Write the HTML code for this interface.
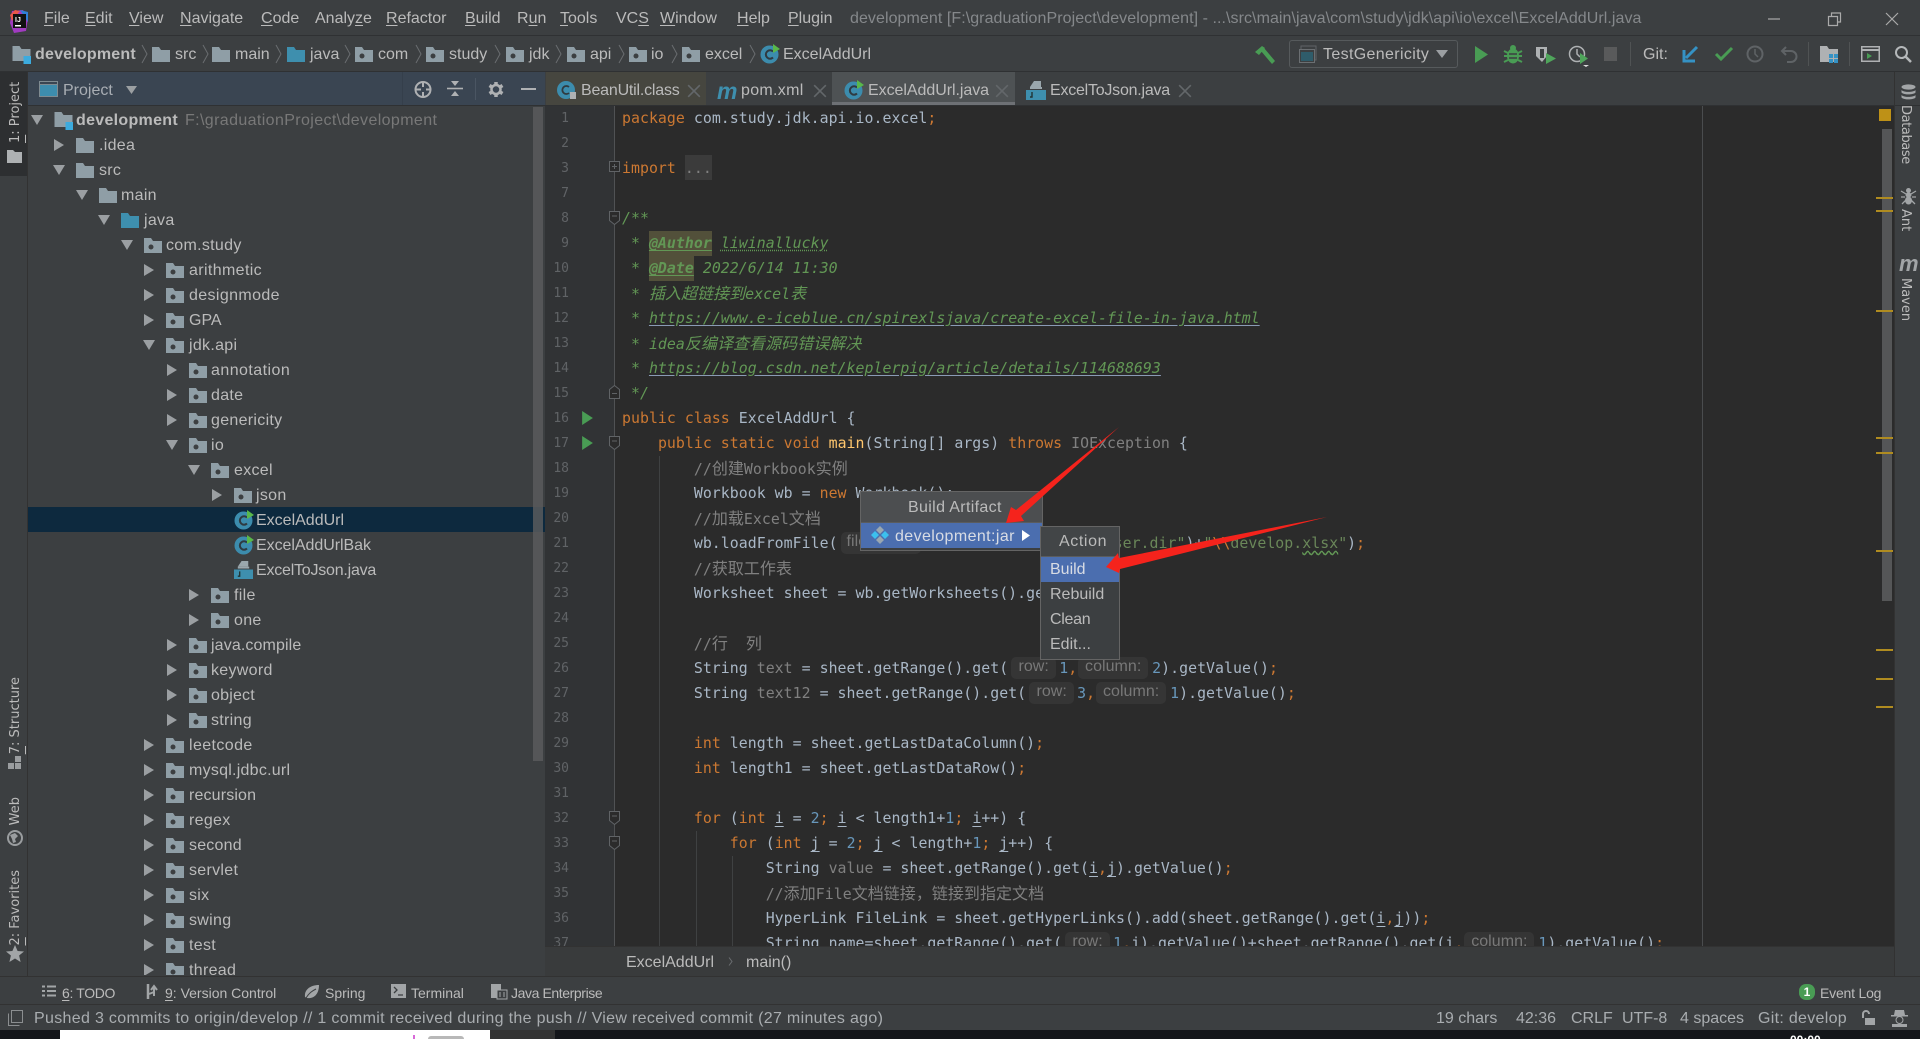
<!DOCTYPE html>
<html><head><meta charset="utf-8"><title>IDEA</title>
<style>
html,body{margin:0;padding:0;background:#3c3f41}
#a{position:relative;width:1920px;height:1039px;overflow:hidden;background:#3c3f41;font-family:"Liberation Sans","Noto Sans CJK SC",sans-serif;font-size:16px;color:#bbb}
.t{position:absolute;white-space:nowrap;line-height:20px}
.p{position:absolute;overflow:visible}
.b{position:absolute}
u{text-decoration-thickness:1px;text-underline-offset:2px}
.m{top:9px}
.n{top:45px}
.ch{position:absolute;top:44px;width:7px;height:20px}
.r{position:absolute;left:0;width:530px;height:25px;line-height:25px;white-space:nowrap}
.r span{position:absolute;top:1px;letter-spacing:.3px}
.r svg{position:absolute}
.c{position:absolute;left:622px;height:25px;line-height:25px;white-space:pre;font-family:"DejaVu Sans Mono","Noto Sans CJK SC",monospace;font-size:14.86px;letter-spacing:.035px;color:#a9b7c6}
.ln{position:absolute;left:545px;width:24px;height:25px;line-height:25px;text-align:right;font-family:"DejaVu Sans Mono",monospace;font-size:13px;color:#606366}
.k{color:#cc7832}.g{color:#808080}.d{color:#629755;font-style:italic}.s{color:#6a8759}.o{color:#6897bb}.f{color:#ffc66d}
.z{font-size:16px}
.h{display:inline-block;position:relative;height:25px;vertical-align:top}
.h i{position:absolute;top:1px;height:22px;background:#353535;border-radius:5px;font:16px/19px "Liberation Sans",sans-serif;color:#787878;text-align:center}
.tag{background:#52503a;font-weight:bold;text-decoration:underline;text-underline-offset:2px;display:inline-block;height:25px}
.lk{text-decoration:underline;text-decoration-color:#8a9bb5;text-underline-offset:2px}
.v{text-decoration:underline;text-underline-offset:3px;text-decoration-thickness:1px}
.vs{writing-mode:vertical-rl;transform:rotate(180deg);font:13px "DejaVu Sans",sans-serif;position:absolute;white-space:nowrap;line-height:16px;color:#bbb}
.vr{writing-mode:vertical-rl;font:13px "DejaVu Sans",sans-serif;position:absolute;white-space:nowrap;line-height:16px;color:#bbb}
.mk{position:absolute;left:1876px;width:17px;height:2px;background:#b08c20}
.x{position:absolute;top:81px;width:14px;height:16px}
.bt{top:983px;font-size:14px}
.st{top:1009px;font-size:16px;color:#a9adb0}
</style></head><body><div id="a">

<svg width="0" height="0" style="position:absolute"><defs>
<symbol id="fo" viewBox="0 0 18 17"><path d="M0 1h7l2 3h9v12H0z" fill="#8f9ea6"/></symbol>
<symbol id="fp" viewBox="0 0 18 17"><path d="M0 1h7l2 3h9v12H0z" fill="#8f9ea6"/><circle cx="7" cy="10" r="2.5" fill="#3c3f41"/></symbol>
<symbol id="fb" viewBox="0 0 18 17"><path d="M0 1h7l2 3h9v12H0z" fill="#3e8fae"/></symbol>
<symbol id="fm" viewBox="0 0 18 20"><path d="M0 1h7l2 3h9v12H0z" fill="#8f9ea6"/><rect x="11" y="11" width="8" height="8" fill="#3cabde"/></symbol>
<symbol id="ao" viewBox="0 0 12 12"><path d="M0 1h12L6 11z" fill="#9b9fa2"/></symbol>
<symbol id="ac" viewBox="0 0 12 12"><path d="M1 0l10 6-10 6z" fill="#9b9fa2"/></symbol>
<symbol id="cl" viewBox="0 0 20 20"><circle cx="9.5" cy="10.5" r="9" fill="#3c8cad"/><path d="M13 7.5A4.2 4.2 0 1 0 13 13.5" fill="none" stroke="#2f3a40" stroke-width="2"/><path d="M13 0l7 5-7 4z" fill="#59b84a"/></symbol>
<symbol id="jf" viewBox="0 0 20 20"><path d="M8 1h7v6H4z" fill="#9aa7ad"/><rect x="4" y="7" width="12" height="2" fill="#9aa7ad"/><rect x="0" y="10" width="20" height="10" fill="#3e8fae"/><path d="M6 12v5H4" fill="none" stroke="#233" stroke-width="1.4"/></symbol>
<symbol id="ch" viewBox="0 0 7 20"><path d="M1 1l5 9-5 9" fill="none" stroke="#6a6d70" stroke-width="1"/></symbol>
<symbol id="tx" viewBox="0 0 12 12"><path d="M1 1l10 10M11 1L1 11" stroke="#63676a" stroke-width="1.4" fill="none"/></symbol>
<symbol id="rn" viewBox="0 0 10 13"><path d="M0 0l10 6.5L0 13z" fill="#499c54"/></symbol>
</defs></svg>

<!-- title bar -->
<div class="b" style="left:0;top:35px;width:1920px;height:1px;background:#2f3133"></div>
<svg class="p" style="left:9px;top:9px" width="20" height="24" viewBox="0 0 20 24"><path d="M3 2l11-1 5 8-2 13-12 2L1 14z" fill="#a03bc0"/><path d="M1 6l5-5 5 1-8 10z" fill="#e8574a"/><path d="M11 1l8 2v10z" fill="#2f7fd8"/><rect x="4" y="5" width="13" height="14" fill="#111"/><rect x="6" y="16" width="6" height="1.5" fill="#fff"/><text x="6" y="13" font-size="7" font-weight="bold" fill="#fff" font-family="Liberation Sans">IJ</text></svg>
<div class="t m" style="left:44px"><u>F</u>ile</div>
<div class="t m" style="left:85px"><u>E</u>dit</div>
<div class="t m" style="left:129px"><u>V</u>iew</div>
<div class="t m" style="left:180px"><u>N</u>avigate</div>
<div class="t m" style="left:261px"><u>C</u>ode</div>
<div class="t m" style="left:315px">Analy<u>z</u>e</div>
<div class="t m" style="left:386px"><u>R</u>efactor</div>
<div class="t m" style="left:465px"><u>B</u>uild</div>
<div class="t m" style="left:517px">R<u>u</u>n</div>
<div class="t m" style="left:560px"><u>T</u>ools</div>
<div class="t m" style="left:616px">VC<u>S</u></div>
<div class="t m" style="left:660px"><u>W</u>indow</div>
<div class="t m" style="left:737px"><u>H</u>elp</div>
<div class="t m" style="left:788px"><u>P</u>lugin</div>
<div class="t" style="left:850px;top:9px;color:#85888b;letter-spacing:.065px">development [F:\graduationProject\development] - ...\src\main\java\com\study\jdk\api\io\excel\ExcelAddUrl.java</div>
<svg class="p" style="left:1768px;top:12px" width="140" height="14"><path d="M0 7h12" stroke="#aaa" stroke-width="1.2"/><path d="M60.5 4.5h9v9h-9zM63.5 4V1h9v9h-3" fill="none" stroke="#aaa" stroke-width="1.2"/><path d="M118 1l12 12M130 1l-12 12" stroke="#aaa" stroke-width="1.2"/></svg>

<!-- nav bar -->
<div class="b" style="left:0;top:71px;width:1920px;height:1px;background:#2f3133"></div>
<svg class="p" style="left:12px;top:45px" width="19" height="20"><use href="#fm"/></svg>
<div class="t n" style="left:35px;font-weight:bold;letter-spacing:.2px">development</div>
<svg class="ch" style="left:141px"><use href="#ch"/></svg>
<svg class="p" style="left:152px;top:46px" width="18" height="17"><use href="#fo"/></svg><div class="t n" style="left:175px">src</div>
<svg class="ch" style="left:202px"><use href="#ch"/></svg>
<svg class="p" style="left:212px;top:46px" width="18" height="17"><use href="#fo"/></svg><div class="t n" style="left:235px">main</div>
<svg class="ch" style="left:275px"><use href="#ch"/></svg>
<svg class="p" style="left:287px;top:46px" width="18" height="17"><use href="#fb"/></svg><div class="t n" style="left:310px">java</div>
<svg class="ch" style="left:344px"><use href="#ch"/></svg>
<svg class="p" style="left:355px;top:46px" width="18" height="17"><use href="#fp"/></svg><div class="t n" style="left:378px">com</div>
<svg class="ch" style="left:415px"><use href="#ch"/></svg>
<svg class="p" style="left:426px;top:46px" width="18" height="17"><use href="#fp"/></svg><div class="t n" style="left:449px">study</div>
<svg class="ch" style="left:494px"><use href="#ch"/></svg>
<svg class="p" style="left:506px;top:46px" width="18" height="17"><use href="#fp"/></svg><div class="t n" style="left:529px">jdk</div>
<svg class="ch" style="left:555px"><use href="#ch"/></svg>
<svg class="p" style="left:567px;top:46px" width="18" height="17"><use href="#fp"/></svg><div class="t n" style="left:590px">api</div>
<svg class="ch" style="left:618px"><use href="#ch"/></svg>
<svg class="p" style="left:629px;top:46px" width="18" height="17"><use href="#fp"/></svg><div class="t n" style="left:651px">io</div>
<svg class="ch" style="left:671px"><use href="#ch"/></svg>
<svg class="p" style="left:682px;top:46px" width="18" height="17"><use href="#fp"/></svg><div class="t n" style="left:705px">excel</div>
<svg class="ch" style="left:749px"><use href="#ch"/></svg>
<svg class="p" style="left:760px;top:44px" width="20" height="20"><use href="#cl"/></svg><div class="t n" style="left:783px">ExcelAddUrl</div>
<svg class="p" style="left:1254px;top:44px" width="22" height="20" viewBox="0 0 22 20"><path d="M1 8L8 2l3 2-6 7zM7 7l3-3 11 13-3 3z" fill="#499c54"/></svg>
<div class="b" style="left:1289px;top:40px;width:167px;height:26px;border:1px solid #565a5c;border-radius:3px"></div>
<svg class="p" style="left:1299px;top:45px" width="18" height="18"><rect x="2" y="1" width="15" height="14" fill="none" stroke="#5f6366"/><rect x="0.5" y="4.5" width="15" height="13" fill="#3c3f41" stroke="#6b6f72"/><rect x="2" y="7" width="12" height="9" fill="#2f5c6a"/></svg>
<div class="t n" style="left:1323px;letter-spacing:.35px">TestGenericity</div>
<svg class="p" style="left:1436px;top:50px" width="12" height="8"><path d="M0 0h12L6 8z" fill="#9b9fa2"/></svg>
<svg class="p" style="left:1475px;top:46px" width="13" height="17"><path d="M0 0l13 8.500L0 17z" fill="#499c54"/></svg>
<svg class="p" style="left:1504px;top:44px" width="18" height="20" viewBox="0 0 18 20"><ellipse cx="9" cy="12" rx="6" ry="7.500" fill="#499c54"/><circle cx="9" cy="4" r="3" fill="#499c54"/><path d="M0 7l4 2M18 7l-4 2M0 12h4M18 12h-4M0 18l4-2M18 18l-4-2" stroke="#499c54" stroke-width="2"/><path d="M5 10h8M5 14h8" stroke="#3c3f41" stroke-width="1.500"/></svg>
<svg class="p" style="left:1535px;top:45px" width="21" height="20" viewBox="0 0 21 20"><path d="M1 2h11v9l-5 6-6-6z" fill="#aeb1b3"/><rect x="5" y="4" width="4" height="9" fill="#3c3f41"/><path d="M11 8l10 5.500L11 19z" fill="#4fa55b"/></svg>
<svg class="p" style="left:1568px;top:45px" width="22" height="22" viewBox="0 0 22 22"><circle cx="9" cy="9" r="7.500" fill="none" stroke="#aeb1b3" stroke-width="1.500"/><path d="M9 4v5l3 3" fill="none" stroke="#aeb1b3" stroke-width="1.500"/><path d="M12 8l8 5.500-8 5.500z" fill="#4fa55b"/><path d="M15 20h6l-3 2z" fill="#ddd"/></svg>
<div class="b" style="left:1604px;top:47px;width:13px;height:14px;background:#595a5b"></div>
<div class="b" style="left:1630px;top:42px;width:1px;height:24px;background:#505354"></div>
<div class="t n" style="left:1643px">Git:</div>
<svg class="p" style="left:1682px;top:45px" width="17" height="18" viewBox="0 0 17 18"><path d="M15 2L4 13M2 5v11h11" fill="none" stroke="#3592c4" stroke-width="3"/></svg>
<svg class="p" style="left:1715px;top:47px" width="18" height="14"><path d="M1 7l5 5L17 1" fill="none" stroke="#499c54" stroke-width="3"/></svg>
<svg class="p" style="left:1746px;top:45px" width="18" height="18"><circle cx="9" cy="9" r="7.500" fill="none" stroke="#5f6366" stroke-width="2"/><path d="M9 4v5l3 3" fill="none" stroke="#5f6366" stroke-width="1.500"/></svg>
<svg class="p" style="left:1780px;top:45px" width="18" height="18"><path d="M6 2L2 6l4 4M2 6h9a5 5 0 0 1 0 11H7" fill="none" stroke="#5f6366" stroke-width="2"/></svg>
<div class="b" style="left:1808px;top:42px;width:1px;height:24px;background:#505354"></div>
<svg class="p" style="left:1820px;top:45px" width="19" height="18"><path d="M0 1h7l2 3h9v13H0z" fill="#afb1b3"/><rect x="9" y="9" width="4" height="4" fill="#3592c4"/><rect x="14" y="9" width="4" height="4" fill="#3592c4"/><rect x="9" y="14" width="4" height="4" fill="#3592c4"/><rect x="14" y="14" width="4" height="4" fill="#3592c4"/></svg>
<div class="b" style="left:1849px;top:42px;width:1px;height:24px;background:#505354"></div>
<svg class="p" style="left:1861px;top:46px" width="19" height="16"><rect x=".75" y=".75" width="17.500" height="14.500" fill="none" stroke="#afb1b3" stroke-width="1.500"/><path d="M1 4h17" stroke="#afb1b3" stroke-width="2"/><path d="M6 7l5 3-5 3z" fill="#499c54"/></svg>
<svg class="p" style="left:1894px;top:45px" width="18" height="18"><circle cx="7.500" cy="7.500" r="5.500" fill="none" stroke="#b5b8ba" stroke-width="2"/><path d="M11.500 11.500L17 17" stroke="#b5b8ba" stroke-width="2.500"/></svg>

<!-- left stripe -->
<div class="b" style="left:27px;top:72px;width:1px;height:904px;background:#323232"></div>
<div class="b" style="left:0;top:72px;width:27px;height:104px;background:#2d2f31"></div>
<div class="vs" style="left:8px;top:81px;height:62px"><u>1</u>: Project</div>
<svg class="p" style="left:7px;top:149px" width="15" height="14"><path d="M0 1h6l2 2h7v11H0z" fill="#aeb1b3"/></svg>
<div class="vs" style="left:8px;top:677px"><u>7</u>: Structure</div>
<svg class="p" style="left:8px;top:756px" width="14" height="13"><rect x="7" y="0" width="6" height="6" fill="#9a9d9f"/><rect x="0" y="7" width="6" height="6" fill="#9a9d9f"/><rect x="7" y="7" width="6" height="6" fill="#9a9d9f"/></svg>
<div class="vs" style="left:8px;top:797px">Web</div>
<svg class="p" style="left:7px;top:830px" width="16" height="16"><circle cx="8" cy="8" r="7" fill="#3c3f41" stroke="#9a9d9f" stroke-width="2"/><path d="M3 5l5-2 3 3-3 3 1 3-3 1-1-4z" fill="#9a9d9f"/></svg>
<div class="vs" style="left:8px;top:870px"><u>2</u>: Favorites</div>
<svg class="p" style="left:6px;top:945px" width="18" height="17"><path d="M9 0l2.600 6 6.400.5-4.900 4 1.500 6.500L9 13.500 3.400 17l1.500-6.500L0 6.500 6.400 6z" fill="#a2a5a7"/></svg>

<!-- project tool window header -->
<div class="b" style="left:28px;top:72px;width:517px;height:33px;background:#3a4552"></div>
<div class="b" style="left:28px;top:105px;width:1892px;height:1px;background:#2f3133"></div>
<div class="b" style="left:402px;top:72px;width:1px;height:33px;background:#353f4b"></div>
<svg class="p" style="left:39px;top:81px" width="19" height="16"><rect x=".5" y=".5" width="18" height="15" fill="#3d8dae" stroke="#7f8b91"/><rect x=".5" y=".5" width="18" height="3" fill="#3a4552" stroke="#7f8b91"/></svg>
<div class="t" style="left:63px;top:81px;color:#a8adb3">Project</div>
<svg class="p" style="left:126px;top:86px" width="11" height="8"><path d="M0 0h11L5.500 8z" fill="#9b9fa2"/></svg>
<svg class="p" style="left:414px;top:80px" width="18" height="19"><circle cx="9" cy="9.500" r="7.500" fill="none" stroke="#afb1b3" stroke-width="2"/><path d="M9 2v5M9 12v5M2 9.500h5M12 9.500h5" stroke="#afb1b3" stroke-width="2"/></svg>
<svg class="p" style="left:447px;top:81px" width="16" height="16"><path d="M0 7.500h16" stroke="#afb1b3" stroke-width="1.600"/><path d="M4 0h8L8 5zM4 15h8l-4-5z" fill="#afb1b3"/></svg>
<div class="b" style="left:475px;top:78px;width:1px;height:22px;background:#4a5562"></div>
<svg class="p" style="left:488px;top:81px" width="16" height="17" viewBox="0 0 16 17"><path d="M8 1v3M8 13v3M1.500 4.500L4 6M12 11l2.500 1.500M1.500 12.500L4 11M12 6l2.500-1.500" stroke="#afb1b3" stroke-width="3.500"/><circle cx="8" cy="8.500" r="4.500" fill="none" stroke="#afb1b3" stroke-width="2.500"/></svg>
<div class="b" style="left:521px;top:88px;width:15px;height:2px;background:#afb1b3"></div>

<!-- tree -->
<div class="b" style="left:28px;top:106px;width:517px;height:869px;overflow:hidden;background:#3c3f41" id="tree">
<div class="b" style="left:0;top:401px;width:517px;height:25px;background:#0d293e"></div>
<div class="b" style="left:505px;top:1px;width:10px;height:654px;background:#595b5d;opacity:.85"></div>
<div style="position:absolute;left:-28px;top:-106px;width:560px">
<div class="r" style="top:107px"><svg style="left:31px;top:7px" width="12" height="12"><use href="#ao"/></svg><svg style="left:54px;top:4px" width="19" height="20"><use href="#fm"/></svg><span style="left:76px;font-weight:bold">development</span><span style="left:185px;color:#787878;letter-spacing:.38px">F:\graduationProject\development</span></div>
<div class="r" style="top:132px"><svg style="left:53px;top:7px" width="12" height="12"><use href="#ac"/></svg><svg style="left:76px;top:5px" width="18" height="17"><use href="#fo"/></svg><span style="left:99px">.idea</span></div>
<div class="r" style="top:157px"><svg style="left:53px;top:7px" width="12" height="12"><use href="#ao"/></svg><svg style="left:76px;top:5px" width="18" height="17"><use href="#fo"/></svg><span style="left:99px">src</span></div>
<div class="r" style="top:182px"><svg style="left:76px;top:7px" width="12" height="12"><use href="#ao"/></svg><svg style="left:99px;top:5px" width="18" height="17"><use href="#fo"/></svg><span style="left:121px">main</span></div>
<div class="r" style="top:207px"><svg style="left:98px;top:7px" width="12" height="12"><use href="#ao"/></svg><svg style="left:121px;top:5px" width="18" height="17"><use href="#fb"/></svg><span style="left:144px">java</span></div>
<div class="r" style="top:232px"><svg style="left:121px;top:7px" width="12" height="12"><use href="#ao"/></svg><svg style="left:144px;top:5px" width="18" height="17"><use href="#fp"/></svg><span style="left:166px">com.study</span></div>
<div class="r" style="top:257px"><svg style="left:143px;top:7px" width="12" height="12"><use href="#ac"/></svg><svg style="left:166px;top:5px" width="18" height="17"><use href="#fp"/></svg><span style="left:189px;letter-spacing:.37px">arithmetic</span></div>
<div class="r" style="top:282px"><svg style="left:143px;top:7px" width="12" height="12"><use href="#ac"/></svg><svg style="left:166px;top:5px" width="18" height="17"><use href="#fp"/></svg><span style="left:189px;letter-spacing:.37px">designmode</span></div>
<div class="r" style="top:307px"><svg style="left:143px;top:7px" width="12" height="12"><use href="#ac"/></svg><svg style="left:166px;top:5px" width="18" height="17"><use href="#fp"/></svg><span style="left:189px;letter-spacing:0">GPA</span></div>
<div class="r" style="top:332px"><svg style="left:143px;top:7px" width="12" height="12"><use href="#ao"/></svg><svg style="left:166px;top:5px" width="18" height="17"><use href="#fp"/></svg><span style="left:189px">jdk.api</span></div>
<div class="r" style="top:357px"><svg style="left:166px;top:7px" width="12" height="12"><use href="#ac"/></svg><svg style="left:189px;top:5px" width="18" height="17"><use href="#fp"/></svg><span style="left:211px;letter-spacing:.45px">annotation</span></div>
<div class="r" style="top:382px"><svg style="left:166px;top:7px" width="12" height="12"><use href="#ac"/></svg><svg style="left:189px;top:5px" width="18" height="17"><use href="#fp"/></svg><span style="left:211px">date</span></div>
<div class="r" style="top:407px"><svg style="left:166px;top:7px" width="12" height="12"><use href="#ac"/></svg><svg style="left:189px;top:5px" width="18" height="17"><use href="#fp"/></svg><span style="left:211px">genericity</span></div>
<div class="r" style="top:432px"><svg style="left:166px;top:7px" width="12" height="12"><use href="#ao"/></svg><svg style="left:189px;top:5px" width="18" height="17"><use href="#fp"/></svg><span style="left:211px">io</span></div>
<div class="r" style="top:457px"><svg style="left:188px;top:7px" width="12" height="12"><use href="#ao"/></svg><svg style="left:211px;top:5px" width="18" height="17"><use href="#fp"/></svg><span style="left:234px">excel</span></div>
<div class="r" style="top:482px"><svg style="left:211px;top:7px" width="12" height="12"><use href="#ac"/></svg><svg style="left:234px;top:5px" width="18" height="17"><use href="#fp"/></svg><span style="left:256px">json</span></div>
<div class="r" style="top:507px"><svg style="left:234px;top:3px" width="20" height="20"><use href="#cl"/></svg><span style="left:256px;letter-spacing:0">ExcelAddUrl</span></div>
<div class="r" style="top:532px"><svg style="left:234px;top:3px" width="20" height="20"><use href="#cl"/></svg><span style="left:256px;letter-spacing:-.05px">ExcelAddUrlBak</span></div>
<div class="r" style="top:557px"><svg style="left:234px;top:3px" width="19" height="19"><use href="#jf"/></svg><span style="left:256px;letter-spacing:-.22px">ExcelToJson.java</span></div>
<div class="r" style="top:582px"><svg style="left:188px;top:7px" width="12" height="12"><use href="#ac"/></svg><svg style="left:211px;top:5px" width="18" height="17"><use href="#fp"/></svg><span style="left:234px">file</span></div>
<div class="r" style="top:607px"><svg style="left:188px;top:7px" width="12" height="12"><use href="#ac"/></svg><svg style="left:211px;top:5px" width="18" height="17"><use href="#fp"/></svg><span style="left:234px">one</span></div>
<div class="r" style="top:632px"><svg style="left:166px;top:7px" width="12" height="12"><use href="#ac"/></svg><svg style="left:189px;top:5px" width="18" height="17"><use href="#fp"/></svg><span style="left:211px;letter-spacing:.12px">java.compile</span></div>
<div class="r" style="top:657px"><svg style="left:166px;top:7px" width="12" height="12"><use href="#ac"/></svg><svg style="left:189px;top:5px" width="18" height="17"><use href="#fp"/></svg><span style="left:211px">keyword</span></div>
<div class="r" style="top:682px"><svg style="left:166px;top:7px" width="12" height="12"><use href="#ac"/></svg><svg style="left:189px;top:5px" width="18" height="17"><use href="#fp"/></svg><span style="left:211px;letter-spacing:.2px">object</span></div>
<div class="r" style="top:707px"><svg style="left:166px;top:7px" width="12" height="12"><use href="#ac"/></svg><svg style="left:189px;top:5px" width="18" height="17"><use href="#fp"/></svg><span style="left:211px">string</span></div>
<div class="r" style="top:732px"><svg style="left:143px;top:7px" width="12" height="12"><use href="#ac"/></svg><svg style="left:166px;top:5px" width="18" height="17"><use href="#fp"/></svg><span style="left:189px;letter-spacing:.4px">leetcode</span></div>
<div class="r" style="top:757px"><svg style="left:143px;top:7px" width="12" height="12"><use href="#ac"/></svg><svg style="left:166px;top:5px" width="18" height="17"><use href="#fp"/></svg><span style="left:189px;letter-spacing:.25px">mysql.jdbc.url</span></div>
<div class="r" style="top:782px"><svg style="left:143px;top:7px" width="12" height="12"><use href="#ac"/></svg><svg style="left:166px;top:5px" width="18" height="17"><use href="#fp"/></svg><span style="left:189px;letter-spacing:.15px">recursion</span></div>
<div class="r" style="top:807px"><svg style="left:143px;top:7px" width="12" height="12"><use href="#ac"/></svg><svg style="left:166px;top:5px" width="18" height="17"><use href="#fp"/></svg><span style="left:189px">regex</span></div>
<div class="r" style="top:832px"><svg style="left:143px;top:7px" width="12" height="12"><use href="#ac"/></svg><svg style="left:166px;top:5px" width="18" height="17"><use href="#fp"/></svg><span style="left:189px;letter-spacing:.2px">second</span></div>
<div class="r" style="top:857px"><svg style="left:143px;top:7px" width="12" height="12"><use href="#ac"/></svg><svg style="left:166px;top:5px" width="18" height="17"><use href="#fp"/></svg><span style="left:189px">servlet</span></div>
<div class="r" style="top:882px"><svg style="left:143px;top:7px" width="12" height="12"><use href="#ac"/></svg><svg style="left:166px;top:5px" width="18" height="17"><use href="#fp"/></svg><span style="left:189px">six</span></div>
<div class="r" style="top:907px"><svg style="left:143px;top:7px" width="12" height="12"><use href="#ac"/></svg><svg style="left:166px;top:5px" width="18" height="17"><use href="#fp"/></svg><span style="left:189px">swing</span></div>
<div class="r" style="top:932px"><svg style="left:143px;top:7px" width="12" height="12"><use href="#ac"/></svg><svg style="left:166px;top:5px" width="18" height="17"><use href="#fp"/></svg><span style="left:189px">test</span></div>
<div class="r" style="top:957px"><svg style="left:143px;top:7px" width="12" height="12"><use href="#ac"/></svg><svg style="left:166px;top:5px" width="18" height="17"><use href="#fp"/></svg><span style="left:189px">thread</span></div>
</div></div>

<!-- tabs -->
<div class="b" style="left:546px;top:72px;width:160px;height:33px;background:#46463f"></div>
<div class="b" style="left:832px;top:72px;width:183px;height:30px;background:#4e5254"></div>
<div class="b" style="left:832px;top:102px;width:183px;height:3px;background:#6e7175"></div>
<svg class="p" style="left:557px;top:80px" width="20" height="20" viewBox="0 0 20 20"><circle cx="9" cy="10" r="9" fill="#3c8cad"/><path d="M12 7a4 4 0 1 0 0 6" fill="none" stroke="#2f3a40" stroke-width="1.800"/><rect x="13" y="12" width="6" height="7" fill="#afb1b3"/></svg>
<div class="t" style="left:581px;top:81px;letter-spacing:-.2px">BeanUtil.class</div>
<svg class="x" style="left:687px;top:83px" width="12" height="12"><use href="#tx"/></svg>
<div class="t" style="left:717px;top:78px;font:italic bold 23px/26px 'Liberation Sans',sans-serif;color:#3e8fae">m</div>
<div class="t" style="left:741px;top:81px;letter-spacing:.3px">pom.xml</div>
<svg class="x" style="left:813px;top:83px" width="12" height="12"><use href="#tx"/></svg>
<svg class="p" style="left:844px;top:80px" width="20" height="20"><use href="#cl"/></svg>
<div class="t" style="left:868px;top:81px;letter-spacing:-.05px">ExcelAddUrl.java</div>
<svg class="x" style="left:995px;top:83px" width="12" height="12"><use href="#tx"/></svg>
<svg class="p" style="left:1026px;top:80px" width="20" height="20"><use href="#jf"/></svg>
<div class="t" style="left:1050px;top:81px;letter-spacing:-.23px">ExcelToJson.java</div>
<svg class="x" style="left:1178px;top:83px" width="12" height="12"><use href="#tx"/></svg>

<!-- right stripe -->
<div class="b" style="left:1894px;top:72px;width:1px;height:904px;background:#323232"></div>
<svg class="p" style="left:1901px;top:84px" width="15" height="17"><ellipse cx="7.500" cy="3" rx="7" ry="2.600" fill="#a2a5a7"/><path d="M.5 6c2 2.500 12 2.500 14 0v2.500c-2 2.500-12 2.500-14 0zM.5 11c2 2.500 12 2.500 14 0v2.500c-2 2.500-12 2.500-14 0z" fill="#a2a5a7"/></svg>
<div class="vr" style="left:1897px;top:105px;letter-spacing:-.4px">Database</div>
<svg class="p" style="left:1901px;top:187px" width="15" height="18"><ellipse cx="7.500" cy="3.500" rx="2.500" ry="2.500" fill="#a2a5a7"/><ellipse cx="7.500" cy="8" rx="3" ry="2.500" fill="#a2a5a7"/><ellipse cx="7.500" cy="13.500" rx="3.500" ry="4" fill="#a2a5a7"/><path d="M0 4l5 3M15 4l-5 3M0 10h4M15 10h-4M1 17l4-4M14 17l-4-4" stroke="#a2a5a7" stroke-width="1.300"/></svg>
<div class="vr" style="left:1897px;top:209px">Ant</div>
<div class="t" style="left:1899px;top:253px;font:italic bold 22px/22px 'Liberation Sans',sans-serif;color:#a2a5a7">m</div>
<div class="vr" style="left:1897px;top:278px">Maven</div>

<!-- editor -->
<div class="b" id="ed" style="left:545px;top:106px;width:1349px;height:840px;overflow:hidden;background:#2b2b2b">
<div class="b" style="left:0;top:0;width:69px;height:840px;background:#313335"></div>
<div class="b" style="left:69px;top:0;width:1px;height:840px;background:#505254"></div>
<div class="b" style="left:1157px;top:0;width:1px;height:840px;background:#4a4c4e"></div>
<div class="b" style="left:114px;top:350px;width:1px;height:490px;background:#3f4142"></div>
<div class="b" style="left:151px;top:725px;width:1px;height:115px;background:#3f4142"></div>
<div class="b" style="left:187px;top:750px;width:1px;height:90px;background:#3f4142"></div>
<div class="b" style="left:1337px;top:23px;width:10px;height:472px;background:#555657"></div>
<div style="position:absolute;left:-545px;top:-106px;width:1920px;height:1039px">
<div class="ln" style="top:106px">1</div><div class="ln" style="top:131px">2</div><div class="ln" style="top:156px">3</div><div class="ln" style="top:181px">7</div><div class="ln" style="top:206px">8</div><div class="ln" style="top:231px">9</div><div class="ln" style="top:256px">10</div><div class="ln" style="top:281px">11</div><div class="ln" style="top:306px">12</div><div class="ln" style="top:331px">13</div><div class="ln" style="top:356px">14</div><div class="ln" style="top:381px">15</div><div class="ln" style="top:406px">16</div><div class="ln" style="top:431px">17</div><div class="ln" style="top:456px">18</div><div class="ln" style="top:481px">19</div><div class="ln" style="top:506px">20</div><div class="ln" style="top:531px">21</div><div class="ln" style="top:556px">22</div><div class="ln" style="top:581px">23</div><div class="ln" style="top:606px">24</div><div class="ln" style="top:631px">25</div><div class="ln" style="top:656px">26</div><div class="ln" style="top:681px">27</div><div class="ln" style="top:706px">28</div><div class="ln" style="top:731px">29</div><div class="ln" style="top:756px">30</div><div class="ln" style="top:781px">31</div><div class="ln" style="top:806px">32</div><div class="ln" style="top:831px">33</div><div class="ln" style="top:856px">34</div><div class="ln" style="top:881px">35</div><div class="ln" style="top:906px">36</div><div class="ln" style="top:931px">37</div>

<svg class="p" style="left:582px;top:411px" width="11" height="14"><use href="#rn"/></svg>
<svg class="p" style="left:582px;top:436px" width="11" height="14"><use href="#rn"/></svg>

<svg class="p" style="left:609px;top:161px" width="12" height="12"><rect x=".5" y=".5" width="10" height="10" fill="#2b2b2b" stroke="#606366"/><path d="M3 5.500h5M5.500 3v5" stroke="#606366"/></svg>
<svg class="p" style="left:609px;top:211px" width="12" height="15"><path d="M.5.5h10v9l-5 4-5-4z" fill="#2b2b2b" stroke="#606366"/><path d="M3 5h5" stroke="#606366"/></svg>
<svg class="p" style="left:609px;top:384px" width="12" height="15"><path d="M.5 14.500h10v-9l-5-4-5 4z" fill="#2b2b2b" stroke="#606366"/><path d="M3 9.500h5" stroke="#606366"/></svg>
<svg class="p" style="left:609px;top:436px" width="12" height="15"><path d="M.5.5h10v9l-5 4-5-4z" fill="#2b2b2b" stroke="#606366"/><path d="M3 5h5" stroke="#606366"/></svg>
<svg class="p" style="left:609px;top:811px" width="12" height="15"><path d="M.5.5h10v9l-5 4-5-4z" fill="#2b2b2b" stroke="#606366"/><path d="M3 5h5" stroke="#606366"/></svg>
<svg class="p" style="left:609px;top:836px" width="12" height="15"><path d="M.5.5h10v9l-5 4-5-4z" fill="#2b2b2b" stroke="#606366"/><path d="M3 5h5" stroke="#606366"/></svg>

<div class="b" style="left:685px;top:155px;width:27px;height:25px;background:#3b3b3b"></div>

<div class="c" style="top:106px"><span class="k">package</span> com.study.jdk.api.io.excel<span class="k">;</span></div>
<div class="c" style="top:156px"><span class="k">import</span> <span class="g">...</span></div>
<div class="c d" style="top:206px">/**</div>
<div class="c d" style="top:231px"> * <span class="tag">@Author</span> <span style="text-decoration:underline dotted;text-underline-offset:2px">liwinallucky</span></div>
<div class="c d" style="top:256px"> * <span class="tag">@Date</span> 2022/6/14 11:30</div>
<div class="c d" style="top:281px"> * <span class="z">插入超链接到</span>excel<span class="z">表</span></div>
<div class="c d" style="top:306px"> * <span class="lk">https://www.e-iceblue.cn/spirexlsjava/create-excel-file-in-java.html</span></div>
<div class="c d" style="top:331px"> * idea<span class="z">反编译查看源码错误解决</span></div>
<div class="c d" style="top:356px"> * <span class="lk">https://blog.csdn.net/keplerpig/article/details/114688693</span></div>
<div class="c d" style="top:381px"> */</div>
<div class="c" style="top:406px"><span class="k">public class</span> ExcelAddUrl {</div>
<div class="c" style="top:431px">    <span class="k">public static void</span> <span class="f">main</span>(String[] args) <span class="k">throws</span> <span class="g">IOException</span> {</div>
<div class="c g" style="top:456px">        //<span class="z">创建</span>Workbook<span class="z">实例</span></div>
<div class="c" style="top:481px">        Workbook wb = <span class="k">new</span> Workbook();</div>
<div class="c g" style="top:506px">        //<span class="z">加载</span>Excel<span class="z">文档</span></div>
<div class="c" style="top:531px">        wb.loadFromFile(<span class="h" style="width:84px"><i style="left:3px;width:74px;padding-left:6px;text-align:left">filename:</i></span></div>
<div class="c" style="top:531px;left:925px">System.getProperty(<span class="s">"user.dir"</span>)+<span class="s">"<span class="k">\\</span>develop.<span style="text-decoration:underline wavy #629755;text-underline-offset:2px">xlsx</span>"</span>)<span class="k">;</span></div>
<div class="c g" style="top:556px">        //<span class="z">获取工作表</span></div>
<div class="c" style="top:581px">        Worksheet sheet = wb.getWorksheets().get(<span class="o">0</span>)<span class="k">;</span></div>
<div class="c g" style="top:631px">        //<span class="z">行</span>  <span class="z">列</span></div>
<div class="c" style="top:656px">        String <span class="g">text</span> = sheet.getRange().get(<span class="h" style="width:51px"><i style="left:3px;width:45px">row:</i></span><span class="o">1</span><span class="k">,</span><span class="h" style="width:75px"><i style="left:1px;width:70px">column:</i></span><span class="o">2</span>).getValue()<span class="k">;</span></div>
<div class="c" style="top:681px">        String <span class="g">text12</span> = sheet.getRange().get(<span class="h" style="width:51px"><i style="left:3px;width:45px">row:</i></span><span class="o">3</span><span class="k">,</span><span class="h" style="width:75px"><i style="left:1px;width:70px">column:</i></span><span class="o">1</span>).getValue()<span class="k">;</span></div>
<div class="c" style="top:731px">        <span class="k">int</span> length = sheet.getLastDataColumn()<span class="k">;</span></div>
<div class="c" style="top:756px">        <span class="k">int</span> length1 = sheet.getLastDataRow()<span class="k">;</span></div>
<div class="c" style="top:806px">        <span class="k">for</span> (<span class="k">int</span> <span class="v">i</span> = <span class="o">2</span><span class="k">;</span> <span class="v">i</span> &lt; length1+<span class="o">1</span><span class="k">;</span> <span class="v">i</span>++) {</div>
<div class="c" style="top:831px">            <span class="k">for</span> (<span class="k">int</span> <span class="v">j</span> = <span class="o">2</span><span class="k">;</span> <span class="v">j</span> &lt; length+<span class="o">1</span><span class="k">;</span> <span class="v">j</span>++) {</div>
<div class="c" style="top:856px">                String <span class="g">value</span> = sheet.getRange().get(<span class="v">i</span><span class="k">,</span><span class="v">j</span>).getValue()<span class="k">;</span></div>
<div class="c g" style="top:881px">                //<span class="z">添加</span>File<span class="z">文档链接，链接到指定文档</span></div>
<div class="c" style="top:906px">                HyperLink FileLink = sheet.getHyperLinks().add(sheet.getRange().get(<span class="v">i</span><span class="k">,</span><span class="v">j</span>))<span class="k">;</span></div>
<div class="c" style="top:931px">                String name=sheet.getRange().get(<span class="h" style="width:51px"><i style="left:3px;width:45px">row:</i></span><span class="o">1</span><span class="k">,</span><span class="v">j</span>).getValue()+sheet.getRange().get(<span class="v">i</span><span class="k">,</span><span class="h" style="width:75px"><i style="left:1px;width:70px">column:</i></span><span class="o">1</span>).getValue()<span class="k">;</span></div>

<div class="b" style="left:1879px;top:109px;width:12px;height:12px;background:#be9117"></div>
<div class="mk" style="top:197px"></div><div class="mk" style="top:210px"></div><div class="mk" style="top:310px"></div><div class="mk" style="top:437px"></div><div class="mk" style="top:452px"></div><div class="mk" style="top:550px"></div><div class="mk" style="top:649px"></div><div class="mk" style="top:678px"></div><div class="mk" style="top:706px"></div>
</div></div>

<!-- breadcrumb -->
<div class="b" style="left:545px;top:946px;width:1349px;height:1px;background:#323232"></div>
<div class="b" style="left:545px;top:947px;width:1349px;height:29px;background:#393b3c"></div>
<div class="t" style="left:626px;top:953px">ExcelAddUrl</div>
<svg class="p" style="left:728px;top:957px" width="5" height="9"><path d="M1 .5l3 4-3 4" fill="none" stroke="#6a6d70"/></svg>
<div class="t" style="left:746px;top:953px">main()</div>

<!-- bottom bars -->
<div class="b" style="left:0;top:976px;width:1920px;height:1px;background:#323232"></div>
<div class="b" style="left:0;top:1004px;width:1920px;height:1px;background:#323232"></div>
<svg class="p" style="left:42px;top:985px" width="14" height="13"><path d="M0 1.500h3M5 1.500h9M0 6h3M5 6h9M0 10.500h3M5 10.500h9" stroke="#a2a5a7" stroke-width="2"/></svg>
<div class="t bt" style="left:62px;letter-spacing:-.35px"><u>6</u>: TODO</div>
<svg class="p" style="left:146px;top:983px" width="13" height="17"><path d="M2 1v15" stroke="#a2a5a7" stroke-width="2.500"/><path d="M8 13V4M5 7l3-4 3 4M3 11l5-2" fill="none" stroke="#a2a5a7" stroke-width="2"/></svg>
<div class="t bt" style="left:165px"><u>9</u>: Version Control</div>
<svg class="p" style="left:304px;top:984px" width="16" height="15"><path d="M1 13C0 6 6 1 15 1c0 9-5 14-12 13z" fill="#a2a5a7"/><path d="M2 14c3-5 6-7 10-9" stroke="#3c3f41" fill="none"/></svg>
<div class="t bt" style="left:325px">Spring</div>
<svg class="p" style="left:391px;top:984px" width="15" height="14"><rect width="15" height="14" fill="#a2a5a7"/><path d="M3 3l3 3-3 3M7 11h5" stroke="#3c3f41" fill="none" stroke-width="1.300"/></svg>
<div class="t bt" style="left:411px">Terminal</div>
<svg class="p" style="left:491px;top:983px" width="16" height="16"><path d="M0 1h10v14H0z" fill="#a2a5a7"/><rect x="6" y="7" width="10" height="9" fill="#3c3f41" stroke="#a2a5a7"/><path d="M9 9v5M13 9v5" stroke="#a2a5a7"/></svg>
<div class="t bt" style="left:511px;letter-spacing:-.4px">Java Enterprise</div>
<div class="b" style="left:1799px;top:984px;width:16px;height:16px;border-radius:7px;background:#499c54;color:#fff;font:bold 12px/16px 'Liberation Sans';text-align:center">1</div>
<div class="t bt" style="left:1820px;letter-spacing:-.2px">Event Log</div>

<!-- status -->
<svg class="p" style="left:8px;top:1010px" width="15" height="16"><path d="M3.500.5h11v12h-11z" fill="none" stroke="#8b8e90"/><path d="M.5 3.500v12h11" fill="none" stroke="#8b8e90"/></svg>
<div class="t st" style="left:34px;letter-spacing:.32px">Pushed 3 commits to origin/develop // 1 commit received during the push // View received commit (27 minutes ago)</div>
<div class="t st" style="left:1436px">19 chars</div>
<div class="t st" style="left:1516px">42:36</div>
<div class="t st" style="left:1571px">CRLF</div>
<div class="t st" style="left:1622px">UTF-8</div>
<div class="t st" style="left:1680px">4 spaces</div>
<div class="t st" style="left:1758px;letter-spacing:.3px">Git: develop</div>
<svg class="p" style="left:1861px;top:1010px" width="14" height="16"><path d="M2 8V4a3 3 0 0 1 6 0" fill="none" stroke="#a2a5a7" stroke-width="2"/><rect x="4" y="8" width="10" height="7" fill="#a2a5a7"/></svg>
<svg class="p" style="left:1891px;top:1009px" width="17" height="18"><path d="M4 1h9l1 5H3z" fill="#a2a5a7"/><rect x="0" y="6" width="17" height="1.500" fill="#a2a5a7"/><circle cx="8.500" cy="11" r="3.500" fill="none" stroke="#a2a5a7"/><rect x="1" y="15" width="15" height="3" fill="#a2a5a7"/></svg>

<!-- desktop strip -->
<div class="b" style="left:0;top:1030px;width:1920px;height:9px;background:#14161a"></div>
<div class="b" style="left:60px;top:1030px;width:430px;height:9px;background:#fff"></div>
<div class="b" style="left:413px;top:1035px;width:2px;height:4px;background:#d86ad8"></div>
<div class="b" style="left:428px;top:1036px;width:36px;height:3px;background:#b8b8b8;border-radius:3px 3px 0 0"></div>
<div class="b" style="left:490px;top:1030px;width:65px;height:9px;background:#333"></div>
<div class="t" style="left:1790px;top:1033px;color:#fff;font-size:12px;font-weight:bold;line-height:14px">00:00</div>

<!-- popups -->
<div class="b" style="left:860px;top:491px;width:181px;height:58px;background:#3c3f41;border:1px solid #646464"></div>
<div class="b" style="left:861px;top:492px;width:181px;height:30px;background:#4c4e50"></div>
<div class="b" style="left:861px;top:522px;width:181px;height:1px;background:#5a5c5e"></div>
<div class="b" style="left:861px;top:523px;width:181px;height:25px;background:#4b6eaf"></div>
<div class="t" style="left:908px;top:498px;letter-spacing:.35px">Build Artifact</div>
<svg class="p" style="left:871px;top:526px" width="18" height="18"><path d="M9 0l4 4-4 4-4-4z" fill="#9aa7b0"/><path d="M4 5l4 4-4 4-4-4z" fill="#3cc0ee"/><path d="M14 5l4 4-4 4-4-4z" fill="#3cc0ee"/><path d="M9 10l4 4-4 4-4-4z" fill="#9aa7b0"/></svg>
<div class="t" style="left:895px;top:527px;color:#d8dce4;letter-spacing:.4px">development:jar</div>
<svg class="p" style="left:1022px;top:530px" width="8" height="11"><path d="M0 0l8 5.500L0 11z" fill="#fff"/></svg>
<div class="b" style="left:1040px;top:526px;width:78px;height:132px;background:#3c3f41;border:1px solid #646464"></div>
<div class="b" style="left:1041px;top:527px;width:78px;height:29px;background:#424547"></div>
<div class="b" style="left:1041px;top:556px;width:78px;height:1px;background:#5a5c5e"></div>
<div class="b" style="left:1041px;top:557px;width:78px;height:25px;background:#4b6eaf"></div>
<div class="t" style="left:1059px;top:532px;letter-spacing:.6px">Action</div>
<div class="t" style="left:1050px;top:560px;color:#d8dce4">Build</div>
<div class="t" style="left:1050px;top:585px">Rebuild</div>
<div class="t" style="left:1050px;top:610px;letter-spacing:-.3px">Clean</div>
<div class="t" style="left:1050px;top:635px">Edit...</div>

<!-- annotation arrows -->
<svg class="p" style="left:0;top:0;pointer-events:none" width="1920" height="1039">
<path d="M1119 427L1021 516 1024 521 1006 523 1011 507 1016 510z" fill="#f5231c"/>
<path d="M1327 517L1120 569 1119 573 1106 567 1118 553 1119 558z" fill="#f5231c"/>
</svg>
</div></body></html>
